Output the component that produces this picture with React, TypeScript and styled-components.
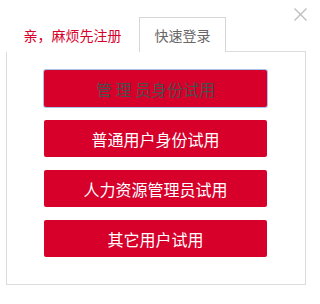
import { createGlobalStyle, styled } from 'styled-components';

const GlobalStyle = createGlobalStyle`
  html, body {
    margin: 0;
    padding: 0;
    background: #fff;
  }
  body {
    font-family: "Microsoft YaHei", "Noto Sans CJK SC", "Liberation Sans", sans-serif;
  }
`;

const trials = [
  { label: '管 理 员身份试用', focused: true },
  { label: '普通用户身份试用', focused: false },
  { label: '人力资源管理员试用', focused: false },
  { label: '其它用户试用', focused: false },
];

export default function App() {
  return (
    <>
      <GlobalStyle />
      <StyledDialog>
        <CloseButton aria-label='关闭'>
          <svg width='13' height='13' viewBox='0 0 13 13'>
            <path d='M0.5 0.5 L12.5 12.5 M12.5 0.5 L0.5 12.5' stroke='#bcbcbc' strokeWidth='1.3' fill='none' />
          </svg>
        </CloseButton>
        <Tabs>
          <Tab>亲，麻烦先注册</Tab>
          <Tab $active>快速登录</Tab>
        </Tabs>
        <Panel>
          {trials.map((t) => (
            <TrialButton key={t.label} $focused={t.focused}>
              {t.label}
            </TrialButton>
          ))}
        </Panel>
      </StyledDialog>
    </>
  );
}

const StyledDialog = styled.div`
  position: relative;
  width: 315px;
  height: 304px;
  box-sizing: border-box;
  padding: 17px 0 0 6px;
`;

const CloseButton = styled.button`
  position: absolute;
  top: 8px;
  right: 8px;
  width: 13px;
  height: 13px;
  padding: 0;
  border: 0;
  background: none;
  display: flex;
  cursor: pointer;
`;

const Tabs = styled.div`
  display: flex;
  height: 35px;
  margin-bottom: -1px;
  position: relative;
  z-index: 1;
`;

const Tab = styled.div<{ $active?: boolean }>`
  box-sizing: border-box;
  height: 35px;
  display: flex;
  align-items: center;
  justify-content: center;
  font-size: 14px;
  width: ${(p) => (p.$active ? '87px' : '133px')};
  color: ${(p) => (p.$active ? '#666' : '#d7002b')};
  background: #fff;
  border: 1px solid ${(p) => (p.$active ? '#d6d6d6' : 'transparent')};
  border-bottom: 0;
  padding-bottom: 1px;
`;

const Panel = styled.div`
  box-sizing: border-box;
  width: 300px;
  height: 234px;
  border: 1px solid #dcdcdc;
  padding: 18px 0 0 37px;
  display: flex;
  flex-direction: column;
  gap: 13px;
`;

const TrialButton = styled.button<{ $focused?: boolean }>`
  width: 223px;
  height: 37px;
  padding: 0;
  border: 0;
  border-radius: 2px;
  background: #d7002b;
  color: ${(p) => (p.$focused ? '#4d4d4d' : '#fff')};
  box-shadow: ${(p) => (p.$focused ? '0 0 0 1px #a8c4ec' : 'none')};
  font-family: inherit;
  font-size: 16px;
  cursor: pointer;
`;
